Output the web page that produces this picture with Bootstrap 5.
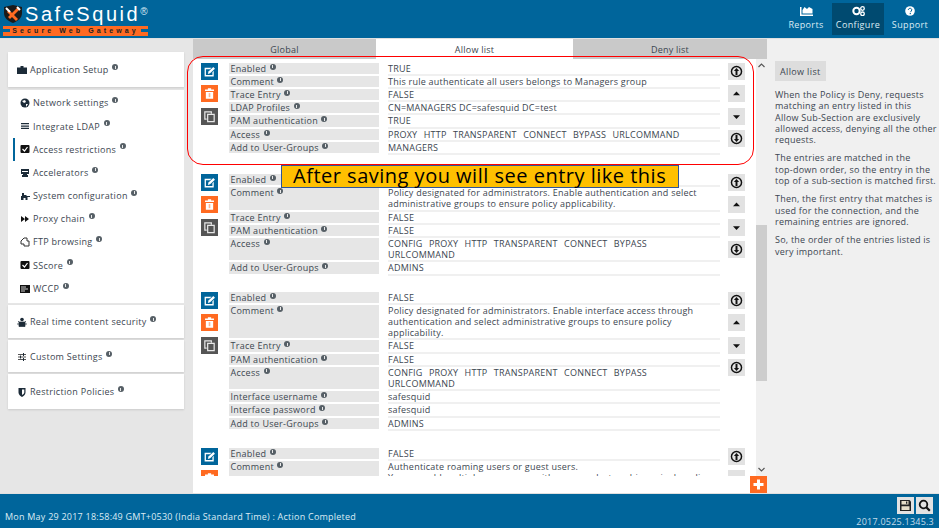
<!DOCTYPE html>
<html lang="en">
  <head>
    <meta charset="UTF-8" />
    <title>SafeSquid - Access restrictions</title>
    <link
      href="https://cdn.jsdelivr.net/npm/bootstrap@5.3.2/dist/css/bootstrap.min.css"
      rel="stylesheet"
    />
    <style>
      html, body { height: 528px; overflow: hidden; }
      body { font-family: "Open Sans", "DejaVu Sans", sans-serif; font-size: 9px; letter-spacing: .23px; color: #3c4650; background: #fff; position: relative; }
      .app-shell { height: 528px; }
      /* header */
      .top-bar { height: 39px; background: #00659b; border-bottom: 1px solid #e0e0e0; }
      .logo-box { width: 150px; padding: 3px 0 0 3px; }
      .logo-name { color: #fff; font-family: "Liberation Sans", sans-serif; font-size: 20px; line-height: 22px; letter-spacing: 2.55px; margin-left: 2px; }
      .logo-name sup { font-size: 10px; top: -6px; letter-spacing: 0; color: #dcecf5; }
      .logo-tag { height: 10px; margin-top: 1px; width: 145px; color: #222; font-family: "Liberation Sans", sans-serif; font-weight: 700; font-size: 7px; line-height: 10px; letter-spacing: 3.1px; text-align: center;
        background: linear-gradient(#00659b, #00659b) 0 3px / 7px 3px no-repeat, linear-gradient(#00659b, #00659b) 100% 3px / 7px 3px no-repeat, #ff6a21; }
      .top-link { width: 52px; height: 32px; margin: 3px 0 0 0; color: #dcecf5; text-align: center; line-height: 11px; padding-top: 3px; font-size: 9px; letter-spacing: .36px; }
      .top-link.on { background: #004a70; }
      .top-link svg { display: block; margin: 0 auto 3px; }
      /* left */
      .side-col { width: 193px; background: #e6e6e6; padding: 13px 9px 0 8px; }
      .side-block { background: #fff; box-shadow: 0 1px 2px rgba(0, 0, 0, .12); margin-bottom: 2px; display: flex; align-items: center; padding-left: 9px; padding-top: 1px; color: #3c4650; letter-spacing: .3px; }
      .side-list { height: 213px; margin: 3px 0 2px; background: #fff; padding: 1.5px 0 0 12px; position: relative; letter-spacing: .3px; }
      .side-item { height: 23.2px; display: flex; align-items: center; }
      .side-mark { position: absolute; left: 5px; top: 48px; width: 2px; height: 23px; background: #00659b; }
      .side-icon { width: 10px; height: 10px; margin-right: 3px; flex-shrink: 0; }
      .info-dot { display: inline-block; width: 6px; height: 6px; border-radius: 50%; background: #565f66; margin-left: 3.5px; vertical-align: 2px; position: relative; }
      .info-dot::after { content: ""; position: absolute; left: 2.5px; top: 1.5px; width: 1px; height: 3px; background: #e8e8e8; }
      .side-item .info-dot, .side-block .info-dot { margin-top: -6px; flex-shrink: 0; }
      /* middle */
      .main-col { width: 574px; background: #fff; position: relative; }
      .tab-bar { height: 20px; }
      .tab-item { background: #c9c9c9; text-align: center; line-height: 22px; color: #3c4650; }
      .tab-item.on { background: #fff; }
      .list-wrap { height: 417px; overflow: hidden; }
      .list-scroll { width: 563px; padding: 3.5px 0 0 8px; overflow: hidden; }
      .entry-box { display: flex; margin-bottom: 16px; }
      .entry-box.first { margin-bottom: 19px; }
      .entry-box.wide-gap { margin-bottom: 17px; }
      .act-col { width: 28px; flex-shrink: 0; }
      .act-btn { width: 17px; height: 17px; margin-bottom: 5.5px; display: flex; align-items: center; justify-content: center; }
      .act-edit { background: #00659b; }
      .act-del { background: #ff6a21; }
      .act-copy { background: #555; }
      .act-move { background: #e2e2e2; }
      .rows-col { width: 491px; flex-shrink: 0; }
      .rule-row { display: flex; margin-bottom: 2px; line-height: 11.2px; }
      .rule-label { width: 150px; background: #e6e6e6; padding-left: 1.5px; flex-shrink: 0; letter-spacing: .27px; }
      .rule-value { width: 332px; margin-left: 9px; box-shadow: 0 2px 0 #f0f0f0; }
      .rule-value.access-list { word-spacing: -.45px; }
      .move-col { width: 17px; margin-left: 8px; flex-shrink: 0; }
      .scroll-track { width: 11px; background: #f0f0f0; }
      .scroll-thumb { height: 156px; margin-top: 153px; background: #cdcdcd; }
      .scroll-arrow { height: 13px; display: flex; align-items: center; justify-content: center; }
      .add-btn { position: absolute; left: 557px; top: 437px; width: 17px; height: 17px; background: #ff6a21; display: flex; align-items: center; justify-content: center; }
      /* right */
      .help-col { width: 172px; background: #f0f0f0; padding: 22px 0 0 8px; line-height: 11.3px; }
      .help-chip { display: inline-block; background: #ddd; height: 20px; line-height: 21px; padding: 0 5px; margin-bottom: 8px; letter-spacing: .36px; }
      .help-col p { margin: 0 0 7px; white-space: nowrap; }
      /* footer */
      .foot-bar { height: 35px; background: #00659b; border-top: 1px solid #e0e0e0; color: #dcecf5; position: relative; }
      .foot-text { padding: 17px 0 0 5px; line-height: 12px; }
      .foot-tools { padding: 3px 6px 0 0; gap: 2px; }
      .foot-btn { width: 17px; height: 17px; background: #e2e2e2; display: flex; align-items: center; justify-content: center; }
      .foot-ver { line-height: 11px; margin-top: 2px; padding-right: 5px; text-align: right; color: #c4dcea; }
      /* annotations */
      .note-ring { position: absolute; left: 187px; top: 56px; width: 567px; height: 109px; border: 1px solid #f00; border-radius: 16px; }
      .note-banner { position: absolute; left: 281px; top: 165px; width: 398px; height: 23px; background: #ffc000; border: 1px solid #2f5597; color: #000; font-size: 20px; line-height: 20px; letter-spacing: .5px; padding-left: 11px; white-space: nowrap; }
    </style>
  </head>
  <body>
    <svg width="0" height="0" class="position-absolute">
      <symbol id="i-edit" viewBox="0 0 16 16"><path d="M2 3.500h8.500l-2 1.600H3.600v7.300h8V9l1.600-1.800v6.800H2z" fill="#fff"/><path d="M6 11l.7-3 6-5.600 2 2.100-6 5.700z" fill="#fff"/></symbol>
      <symbol id="i-trash" viewBox="0 0 16 16"><path d="M6 1.500h4V3h3.500v2h-11V3H6zM3.500 6h9v8.500h-9z" fill="#fff"/><path d="M7 7.500h2v5H7z" fill="#ff6a21" opacity=".5"/></symbol>
      <symbol id="i-copy" viewBox="0 0 16 16"><path d="M1.500 1.500H11v3H9.500V3H3v7.500h1.500V12h-3z" fill="#e8e8e8"/><path d="M5 4.500h9.500V15H5zM6.500 6v7.500H13V6z" fill="#e8e8e8"/></symbol>
      <symbol id="i-top" viewBox="0 0 16 16"><circle cx="8" cy="8" r="6.200" fill="none" stroke="#111" stroke-width="1.800"/><path d="M8 3.800l3.200 3.600H9.200v4.800H6.800V7.400H4.800z" fill="#111"/></symbol>
      <symbol id="i-bottom" viewBox="0 0 16 16"><circle cx="8" cy="8" r="6.200" fill="none" stroke="#111" stroke-width="1.800"/><path d="M8 12.200l3.200-3.600H9.200V3.800H6.800v4.800H4.800z" fill="#111"/></symbol>
      <symbol id="i-up" viewBox="0 0 16 16"><path d="M3.700 10L8 5.500l4.300 4.500z" fill="#111"/></symbol>
      <symbol id="i-down" viewBox="0 0 16 16"><path d="M3.700 6.500L8 11l4.300-4.500z" fill="#111"/></symbol>
    </svg>

    <div class="app-shell d-flex flex-column">
      <!-- Header -->
      <div class="top-bar d-flex justify-content-between flex-shrink-0">
        <div class="logo-box">
          <div class="d-flex align-items-center">
            <svg width="20" height="20" viewBox="0 0 20 20"><path d="M1 3l9-2 9 2v6c0 5-4 8-9 10C5 17 1 14 1 9z" fill="#1a1a1a"/><path d="M6 6l9 9-2 2-9-9z" fill="#ff6a21"/><path d="M14 4l2 2-9 9-2-2z" fill="#ff6a21"/><path d="M3 4l4 4M14 3l3 3" stroke="#fff" stroke-width="2"/></svg>
            <span class="logo-name">SafeSquid<sup>®</sup></span>
          </div>
          <div class="logo-tag">Secure Web Gateway</div>
        </div>
        <div class="d-flex" style="padding-right: 3px">
          <div class="top-link">
            <svg width="13" height="10" viewBox="0 0 13 10"><path d="M0 1h1.500v7.500H13V10H0zM2.500 7.500V4l2-3 2.500 2L9 1l3.500 2v4.500z" fill="#fff"/></svg>
            Reports
          </div>
          <div class="top-link on">
            <svg width="13" height="10" viewBox="0 0 13 10"><circle cx="4.500" cy="5" r="3.200" fill="none" stroke="#fff" stroke-width="2"/><circle cx="10.500" cy="2.500" r="1.800" fill="none" stroke="#fff" stroke-width="1.300"/><circle cx="10.500" cy="7.800" r="1.800" fill="none" stroke="#fff" stroke-width="1.300"/></svg>
            Configure
          </div>
          <div class="top-link">
            <svg width="10" height="10" viewBox="0 0 10 10"><circle cx="5" cy="5" r="4.800" fill="#fff"/><path d="M3.300 4c0-2.300 3.600-2.300 3.500 0 0 1.200-1.300 1-1.300 2.200" fill="none" stroke="#00659b" stroke-width="1"/><rect x="4.700" y="7" width="1.200" height="1.200" fill="#00659b"/></svg>
            Support
          </div>
        </div>
      </div>

      <div class="d-flex flex-grow-1" style="min-height: 0">
        <!-- Sidebar -->
        <div class="side-col flex-shrink-0">
          <div class="side-block" style="height: 35px">
            <svg class="side-icon" viewBox="0 0 10 10"><path d="M3.500 1h3v1.500H10V9H0V2.500h3.500z" fill="#1c2b38"/></svg>Application Setup<span class="info-dot"></span>
          </div>
          <div class="side-list">
            <span class="side-mark"></span>
            <div class="side-item"><svg class="side-icon" viewBox="0 0 10 10"><circle cx="5" cy="5" r="4.500" fill="#1c2b38"/><path d="M2 3l3-1 1 2-2 1zM6 6h2L6 9z" fill="#fff"/></svg>Network settings<span class="info-dot"></span></div>
            <div class="side-item"><svg class="side-icon" viewBox="0 0 10 10"><path d="M1 2h8v1.300H1zM1 4.400h8v1.300H1zM1 6.800h8v1.300H1z" fill="#1c2b38"/></svg>Integrate LDAP<span class="info-dot"></span></div>
            <div class="side-item"><svg class="side-icon" viewBox="0 0 10 10"><rect x=".5" y="1" width="9" height="8" rx="1" fill="#111"/><path d="M2.500 5l2 2 3-4" fill="none" stroke="#fff" stroke-width="1.200"/></svg>Access restrictions<span class="info-dot"></span></div>
            <div class="side-item"><svg class="side-icon" viewBox="0 0 10 10"><path d="M1 1h8v5H7v1h1v2H2V7h1V6H1z" fill="#1c2b38"/><path d="M2 3h6v1H2z" fill="#fff"/></svg>Accelerators<span class="info-dot"></span></div>
            <div class="side-item"><svg class="side-icon" viewBox="0 0 10 10"><path d="M2 2h2v2h2l1 1h3v1H7.500v3h-2V7h-2v2H1V5h1z" fill="#1c2b38"/></svg>System configuration<span class="info-dot"></span></div>
            <div class="side-item"><svg class="side-icon" viewBox="0 0 10 10"><path d="M1 2l4 3-4 3zM5 2l4 3-4 3z" fill="#111"/></svg>Proxy chain<span class="info-dot"></span></div>
            <div class="side-item"><svg class="side-icon" viewBox="0 0 10 10"><path d="M1 4l3-3h3v3h2v5H4V7H1z" fill="none" stroke="#333" stroke-width="1"/></svg>FTP browsing<span class="info-dot"></span></div>
            <div class="side-item"><svg class="side-icon" viewBox="0 0 10 10"><rect x=".5" y="1" width="9" height="8" rx="1" fill="#111"/><path d="M2.500 5l2 2 3-4" fill="none" stroke="#fff" stroke-width="1.200"/></svg>SScore<span class="info-dot"></span></div>
            <div class="side-item"><svg class="side-icon" viewBox="0 0 10 10"><rect y="1" width="10" height="8" fill="#111"/><path d="M1 3h5M1 5h7M1 7h4" stroke="#fff" stroke-width=".8"/></svg>WCCP<span class="info-dot"></span></div>
          </div>
          <div class="side-block" style="height: 33px">
            <svg class="side-icon" viewBox="0 0 10 10"><circle cx="5" cy="2.500" r="1.800" fill="#1c2b38"/><path d="M2 5h6v4.500H2zM1 4l1 1M9 4L8 5M0 7h2M8 7h2" stroke="#1c2b38" fill="#1c2b38" stroke-width=".7"/></svg>Real time content security<span class="info-dot"></span>
          </div>
          <div class="side-block" style="height: 32px">
            <svg class="side-icon" viewBox="0 0 10 10"><path d="M1 2h8v1H1zM1 4.500h8v1H1zM1 7h8v1H1z" fill="#555"/><path d="M6 1h1v3H6zM3 3.500h1v3H3zM6 6h1v3H6z" fill="#1c2b38"/></svg>Custom Settings<span class="info-dot"></span>
          </div>
          <div class="side-block" style="height: 35px">
            <svg class="side-icon" viewBox="0 0 10 10"><path d="M1.500 1h7v4.500C8.500 8 6.500 9 5 10 3.500 9 1.500 8 1.500 5.500z" fill="#1c2b38"/><path d="M5 2.500h2.300v3C7.300 6.500 6 7.500 5 8z" fill="#fff"/></svg>Restriction Policies<span class="info-dot"></span>
          </div>
        </div>

        <!-- Rules -->
        <div class="main-col flex-shrink-0">
          <div class="tab-bar d-flex">
            <div class="tab-item" style="width: 183px">Global</div>
            <div class="tab-item on" style="width: 197px">Allow list</div>
            <div class="tab-item" style="width: 194px">Deny list</div>
          </div>
          <div class="list-wrap d-flex">
            <div class="list-scroll">
              <div class="entry-box first">
                <div class="act-col">
                  <div class="act-btn act-edit"><svg width="13" height="13"><use href="#i-edit"/></svg></div>
                  <div class="act-btn act-del"><svg width="13" height="13"><use href="#i-trash"/></svg></div>
                  <div class="act-btn act-copy"><svg width="13" height="13"><use href="#i-copy"/></svg></div>
                </div>
                <div class="rows-col">
                  <div class="rule-row"><div class="rule-label">Enabled<span class="info-dot"></span></div><div class="rule-value">TRUE</div></div>
                  <div class="rule-row"><div class="rule-label">Comment<span class="info-dot"></span></div><div class="rule-value">This rule authenticate all users belongs to Managers group</div></div>
                  <div class="rule-row"><div class="rule-label">Trace Entry<span class="info-dot"></span></div><div class="rule-value">FALSE</div></div>
                  <div class="rule-row"><div class="rule-label">LDAP Profiles<span class="info-dot"></span></div><div class="rule-value">CN=MANAGERS DC=safesquid DC=test</div></div>
                  <div class="rule-row"><div class="rule-label">PAM authentication<span class="info-dot"></span></div><div class="rule-value">TRUE</div></div>
                  <div class="rule-row"><div class="rule-label">Access<span class="info-dot"></span></div><div class="rule-value access-list">PROXY&nbsp;&nbsp; HTTP&nbsp;&nbsp; TRANSPARENT&nbsp;&nbsp; CONNECT&nbsp;&nbsp; BYPASS&nbsp;&nbsp; URLCOMMAND</div></div>
                  <div class="rule-row"><div class="rule-label">Add to User-Groups<span class="info-dot"></span></div><div class="rule-value">MANAGERS</div></div>
                </div>
                <div class="move-col">
                  <div class="act-btn act-move"><svg width="13" height="13"><use href="#i-top"/></svg></div>
                  <div class="act-btn act-move"><svg width="13" height="13"><use href="#i-up"/></svg></div>
                  <div class="act-btn act-move"><svg width="13" height="13"><use href="#i-down"/></svg></div>
                  <div class="act-btn act-move"><svg width="13" height="13"><use href="#i-bottom"/></svg></div>
                </div>
              </div>

              <div class="entry-box">
                <div class="act-col">
                  <div class="act-btn act-edit"><svg width="13" height="13"><use href="#i-edit"/></svg></div>
                  <div class="act-btn act-del"><svg width="13" height="13"><use href="#i-trash"/></svg></div>
                  <div class="act-btn act-copy"><svg width="13" height="13"><use href="#i-copy"/></svg></div>
                </div>
                <div class="rows-col">
                  <div class="rule-row"><div class="rule-label">Enabled<span class="info-dot"></span></div><div class="rule-value">TRUE</div></div>
                  <div class="rule-row"><div class="rule-label">Comment<span class="info-dot"></span></div><div class="rule-value">Policy designated for administrators. Enable authentication and select<br />administrative groups to ensure policy applicability.</div></div>
                  <div class="rule-row"><div class="rule-label">Trace Entry<span class="info-dot"></span></div><div class="rule-value">FALSE</div></div>
                  <div class="rule-row"><div class="rule-label">PAM authentication<span class="info-dot"></span></div><div class="rule-value">FALSE</div></div>
                  <div class="rule-row"><div class="rule-label">Access<span class="info-dot"></span></div><div class="rule-value access-list">CONFIG&nbsp;&nbsp; PROXY&nbsp;&nbsp; HTTP&nbsp;&nbsp; TRANSPARENT&nbsp;&nbsp; CONNECT&nbsp;&nbsp; BYPASS<br />URLCOMMAND</div></div>
                  <div class="rule-row"><div class="rule-label">Add to User-Groups<span class="info-dot"></span></div><div class="rule-value">ADMINS</div></div>
                </div>
                <div class="move-col">
                  <div class="act-btn act-move"><svg width="13" height="13"><use href="#i-top"/></svg></div>
                  <div class="act-btn act-move"><svg width="13" height="13"><use href="#i-up"/></svg></div>
                  <div class="act-btn act-move"><svg width="13" height="13"><use href="#i-down"/></svg></div>
                  <div class="act-btn act-move"><svg width="13" height="13"><use href="#i-bottom"/></svg></div>
                </div>
              </div>

              <div class="entry-box wide-gap">
                <div class="act-col">
                  <div class="act-btn act-edit"><svg width="13" height="13"><use href="#i-edit"/></svg></div>
                  <div class="act-btn act-del"><svg width="13" height="13"><use href="#i-trash"/></svg></div>
                  <div class="act-btn act-copy"><svg width="13" height="13"><use href="#i-copy"/></svg></div>
                </div>
                <div class="rows-col">
                  <div class="rule-row"><div class="rule-label">Enabled<span class="info-dot"></span></div><div class="rule-value">FALSE</div></div>
                  <div class="rule-row"><div class="rule-label">Comment<span class="info-dot"></span></div><div class="rule-value">Policy designated for administrators. Enable interface access through<br />authentication and select administrative groups to ensure policy<br />applicability.</div></div>
                  <div class="rule-row"><div class="rule-label">Trace Entry<span class="info-dot"></span></div><div class="rule-value">FALSE</div></div>
                  <div class="rule-row"><div class="rule-label">PAM authentication<span class="info-dot"></span></div><div class="rule-value">FALSE</div></div>
                  <div class="rule-row"><div class="rule-label">Access<span class="info-dot"></span></div><div class="rule-value access-list">CONFIG&nbsp;&nbsp; PROXY&nbsp;&nbsp; HTTP&nbsp;&nbsp; TRANSPARENT&nbsp;&nbsp; CONNECT&nbsp;&nbsp; BYPASS<br />URLCOMMAND</div></div>
                  <div class="rule-row"><div class="rule-label">Interface username<span class="info-dot"></span></div><div class="rule-value">safesquid</div></div>
                  <div class="rule-row"><div class="rule-label">Interface password<span class="info-dot"></span></div><div class="rule-value">safesquid</div></div>
                  <div class="rule-row"><div class="rule-label">Add to User-Groups<span class="info-dot"></span></div><div class="rule-value">ADMINS</div></div>
                </div>
                <div class="move-col">
                  <div class="act-btn act-move"><svg width="13" height="13"><use href="#i-top"/></svg></div>
                  <div class="act-btn act-move"><svg width="13" height="13"><use href="#i-up"/></svg></div>
                  <div class="act-btn act-move"><svg width="13" height="13"><use href="#i-down"/></svg></div>
                  <div class="act-btn act-move"><svg width="13" height="13"><use href="#i-bottom"/></svg></div>
                </div>
              </div>

              <div class="entry-box">
                <div class="act-col">
                  <div class="act-btn act-edit"><svg width="13" height="13"><use href="#i-edit"/></svg></div>
                  <div class="act-btn act-del"><svg width="13" height="13"><use href="#i-trash"/></svg></div>
                </div>
                <div class="rows-col">
                  <div class="rule-row"><div class="rule-label">Enabled<span class="info-dot"></span></div><div class="rule-value">FALSE</div></div>
                  <div class="rule-row"><div class="rule-label">Comment<span class="info-dot"></span></div><div class="rule-value">Authenticate roaming users or guest users.<br />You can add multiple usernames with passwords, to achieve single policy</div></div>
                </div>
                <div class="move-col">
                  <div class="act-btn act-move"><svg width="13" height="13"><use href="#i-top"/></svg></div>
                  <div class="act-btn act-move"><svg width="13" height="13"><use href="#i-up"/></svg></div>
                </div>
              </div>
            </div>
            <div class="scroll-track d-flex flex-column">
              <div class="scroll-arrow"><svg width="7" height="5" viewBox="0 0 7 5"><path d="M.5 4l3-3 3 3" fill="none" stroke="#555" stroke-width="1.200"/></svg></div>
              <div class="scroll-thumb"></div>
              <div class="scroll-arrow mt-auto"><svg width="7" height="5" viewBox="0 0 7 5"><path d="M.5 1l3 3 3-3" fill="none" stroke="#555" stroke-width="1.200"/></svg></div>
            </div>
          </div>
          <div class="add-btn"><svg width="11" height="11" viewBox="0 0 11 11"><path d="M4 .5h3V4h3.500v3H7v3.500H4V7H.5V4H4z" fill="#fff"/></svg></div>
        </div>

        <!-- Help -->
        <div class="help-col flex-grow-1">
          <div class="help-chip">Allow list</div>
          <p>When the Policy is Deny, requests<br />matching an entry listed in this<br />Allow Sub-Section are exclusively<br />allowed access, denying all the other<br />requests.</p>
          <p>The entries are matched in the<br />top-down order, so the entry in the<br />top of a sub-section is matched first.</p>
          <p>Then, the first entry that matches is<br />used for the connection, and the<br />remaining entries are ignored.</p>
          <p>So, the order of the entries listed is<br />very important.</p>
        </div>
      </div>

      <!-- Footer -->
      <div class="foot-bar d-flex justify-content-between flex-shrink-0">
        <div class="foot-text">Mon May 29 2017 18:58:49 GMT+0530 (India Standard Time) : Action Completed</div>
        <div>
          <div class="foot-tools d-flex justify-content-end">
            <div class="foot-btn"><svg width="13" height="13" viewBox="0 0 13 13"><path d="M1 1h9.500L12 2.500V12H1z" fill="#222"/><path d="M2.500 2H9.500V5.500H2.500zM2.500 7.200h8V11h-8z" fill="#e6ddc8"/><path d="M7 2.500h1.300v2.300H7z" fill="#222"/></svg></div>
            <div class="foot-btn"><svg width="13" height="13" viewBox="0 0 13 13"><circle cx="5.500" cy="5.500" r="3.800" fill="none" stroke="#111" stroke-width="1.800"/><path d="M8.300 8.300l3.500 3.500" stroke="#111" stroke-width="2.200"/></svg></div>
          </div>
          <div class="foot-ver">2017.0525.1345.3</div>
        </div>
      </div>
    </div>

    <!-- Annotation drawn over the page -->
    <div class="note-ring"></div>
    <div class="note-banner">After saving you will see entry like this</div>

    <script src="https://cdn.jsdelivr.net/npm/bootstrap@5.3.2/dist/js/bootstrap.bundle.min.js"></script>
  </body>
</html>
